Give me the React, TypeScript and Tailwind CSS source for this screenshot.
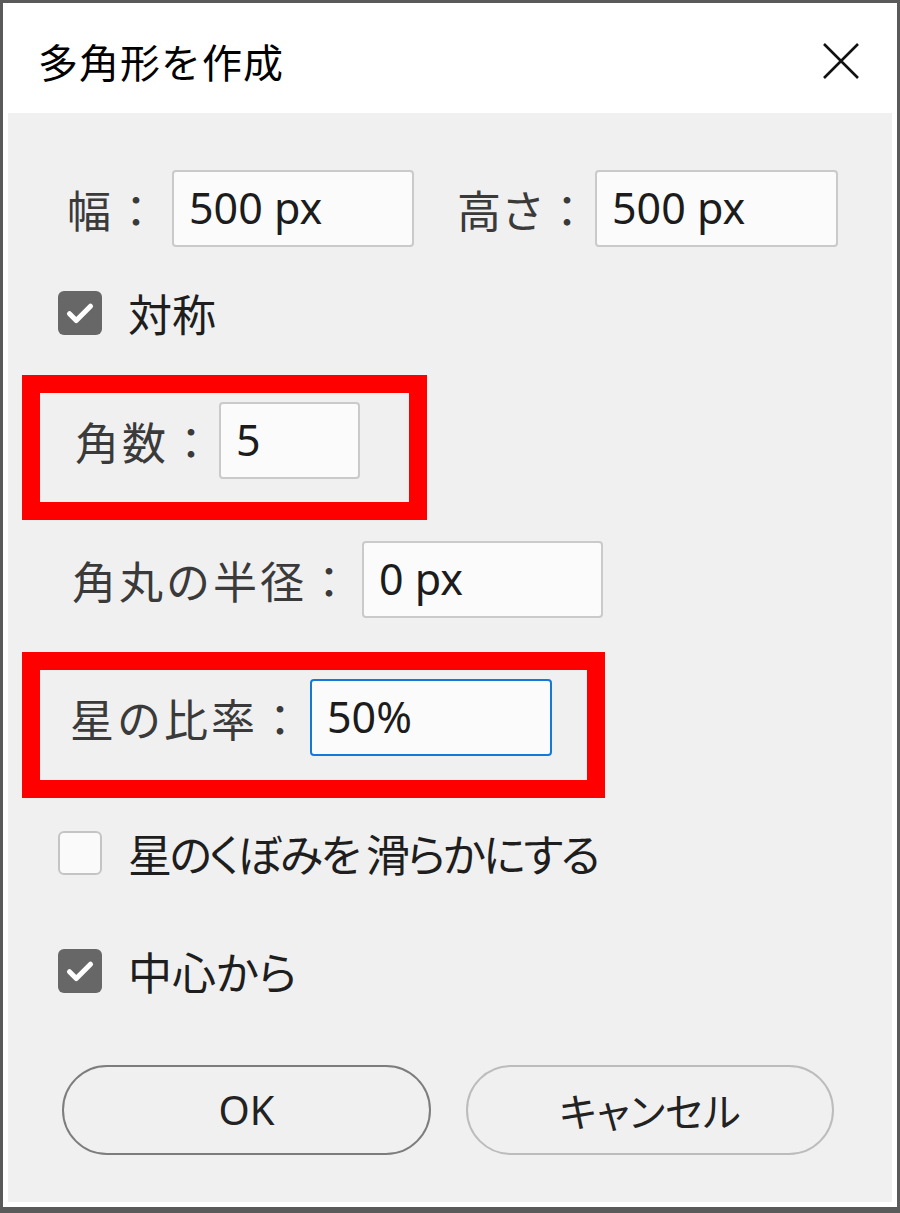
import type { ReactNode } from "react";

const jp = "font-['Noto_Sans_CJK_JP','Noto_Sans',sans-serif]";
const num = "font-['Noto_Sans','Noto_Sans_CJK_JP',sans-serif]";

function Field({ value, w, focused = false }: { value: string; w: string; focused?: boolean }) {
  return (
    <div
      className={`${w} h-[77px] shrink-0 flex items-center pl-[15px] rounded-[4px] bg-[#fbfbfb] border-2 ${
        focused ? "border-[#1479d6]" : "border-[#cacaca]"
      } ${num} text-[43px] text-[#1c1c1c]`}
    >
      {value}
    </div>
  );
}

function Label({ children, w, tight = false }: { children: ReactNode; w: string; tight?: boolean }) {
  return (
    <div
      className={`${w} shrink-0 whitespace-nowrap ${jp} text-[44px] ${
        tight ? "tracking-normal" : "tracking-[3px]"
      } text-[#3a3a3a] leading-none`}
    >
      {children}
    </div>
  );
}

function Check({ on, label, cls = "" }: { on: boolean; label: string; cls?: string }) {
  return (
    <div className="flex items-center ml-[50px]">
      {on ? (
        <div className="w-[44px] h-[44px] rounded-[6px] bg-[#676767] flex items-center justify-center">
          <svg width="36" height="36" viewBox="0 0 24 24" fill="none">
            <path d="M5 12.5l4.5 4.5L19 7.5" stroke="#fff" strokeWidth="3.4" strokeLinecap="round" strokeLinejoin="round" />
          </svg>
        </div>
      ) : (
        <div className="w-[44px] h-[44px] rounded-[6px] bg-[#fafafa] border-2 border-[#c4c4c4]" />
      )}
      <span className={`ml-[26px] whitespace-nowrap ${jp} text-[44px] leading-none text-[#1e1e1e] ${cls}`}>
        {label}
      </span>
    </div>
  );
}

export default function App() {
  return (
    <div className="w-[900px] h-[1213px] flex flex-col bg-white border-[#5a5a5a] border-t-[3px] border-x-[3px] border-b-[6px] p-[5px]">
      <div className="h-[105px] shrink-0 flex items-center justify-between pl-[30px] pr-[32px]">
        <span className={`${jp} text-[40px] tracking-[1px] text-black leading-none`}>多角形を作成</span>
        <svg width="38" height="38" viewBox="0 0 38 38" fill="none">
          <path d="M2 2L36 36M36 2L2 36" stroke="#111" strokeWidth="2.6" />
        </svg>
      </div>

      <div className="flex-1 bg-[#f0f0f0] flex flex-col">
        <div className="mt-[57px] ml-[59px] flex items-center">
          <Label w="w-[105px]">幅：</Label>
          <Field value="500 px" w="w-[242px]" />
          <div className="w-[43px]" />
          <Label w="w-[138px]" tight>
            高さ：
          </Label>
          <Field value="500 px" w="w-[243px]" />
        </div>

        <div className="mt-[44px]">
          <Check on label="対称" />
        </div>

        <div className="mt-[40px] ml-[14px] w-[405px] h-[145px] border-[18px] border-[#ff0000] flex pl-[35px] pt-[9px]">
          <div className="flex items-center h-[77px]">
            <Label w="w-[144px]">角数：</Label>
            <Field value="5" w="w-[141px]" />
          </div>
        </div>

        <div className="mt-[21px] ml-[64px] flex items-center">
          <Label w="w-[290px]">角丸の半径：</Label>
          <Field value="0 px" w="w-[241px]" />
        </div>

        <div className="mt-[34px] ml-[14px] w-[583px] h-[146px] border-[18px] border-[#ff0000] flex pl-[30px] pt-[8px]">
          <div className="flex items-center h-[79px]">
            <Label w="w-[240px]">星の比率：</Label>
            <Field value="50%" w="w-[242px]" focused />
          </div>
        </div>

        <div className="mt-[33px]">
          <Check on={false} label="星のくぼみを 滑らかにする" cls="[font-feature-settings:'palt'] tracking-[-2.5px]" />
        </div>

        <div className="mt-[74px]">
          <Check on label="中心から" cls="[font-feature-settings:'palt']" />
        </div>

        <div className="mt-[72px] ml-[54px] flex gap-[35px]">
          <button className={`w-[369px] h-[90px] rounded-full border-2 border-[#7d7d7d] ${num} text-[40px] text-[#222]`}>
            OK
          </button>
          <button
            className={`w-[368px] h-[90px] rounded-full border-2 border-[#bcbcbc] ${jp} text-[40px] text-[#222] [font-feature-settings:'palt']`}
          >
            キャンセル
          </button>
        </div>
      </div>
    </div>
  );
}
